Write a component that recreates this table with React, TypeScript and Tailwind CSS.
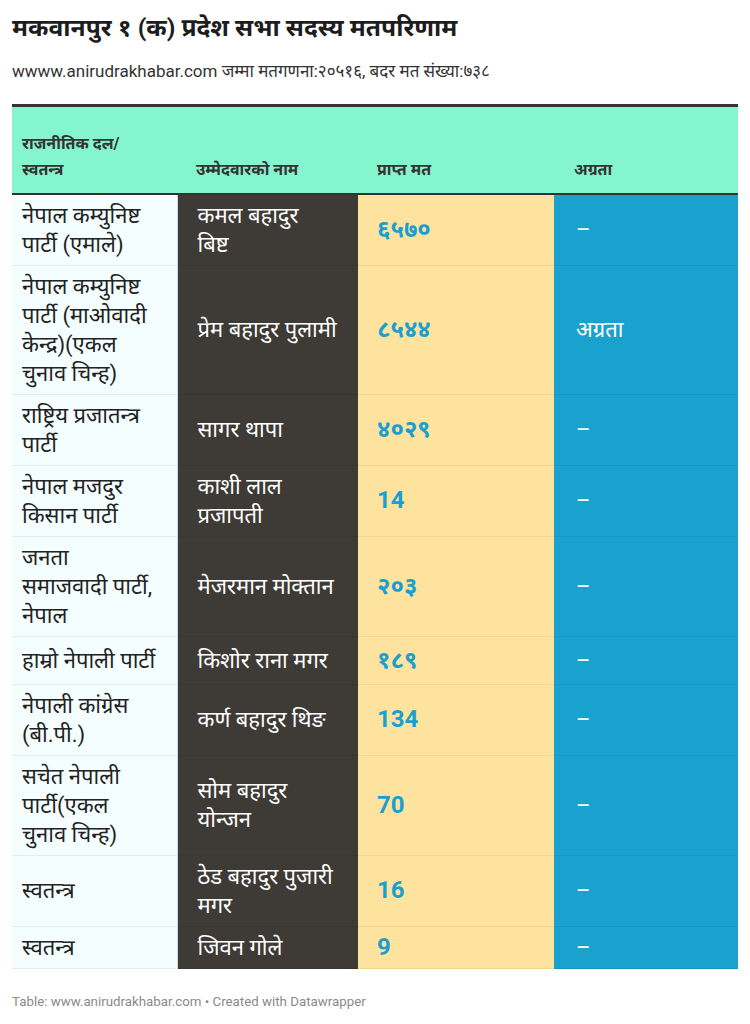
const rows = [
  { party: ["नेपाल कम्युनिष्ट", "पार्टी (एमाले)"], name: ["कमल बहादुर", "बिष्ट"], votes: "६५७०", lead: "–" },
  {
    party: ["नेपाल कम्युनिष्ट", "पार्टी (माओवादी", "केन्द्र)(एकल", "चुनाव चिन्ह)"],
    name: ["प्रेम बहादुर पुलामी"],
    votes: "८५४४",
    lead: "अग्रता",
  },
  { party: ["राष्ट्रिय प्रजातन्त्र", "पार्टी"], name: ["सागर थापा"], votes: "४०२९", lead: "–" },
  { party: ["नेपाल मजदुर", "किसान पार्टी"], name: ["काशी लाल", "प्रजापती"], votes: "14", lead: "–" },
  { party: ["जनता", "समाजवादी पार्टी,", "नेपाल"], name: ["मेजरमान मोक्तान"], votes: "२०३", lead: "–" },
  { party: ["हाम्रो नेपाली पार्टी"], name: ["किशोर राना मगर"], votes: "१८९", lead: "–", tall: true },
  { party: ["नेपाली कांग्रेस", "(बी.पी.)"], name: ["कर्ण बहादुर थिङ"], votes: "134", lead: "–" },
  { party: ["सचेत नेपाली", "पार्टी(एकल", "चुनाव चिन्ह)"], name: ["सोम बहादुर", "योन्जन"], votes: "70", lead: "–" },
  { party: ["स्वतन्त्र"], name: ["ठेड बहादुर पुजारी", "मगर"], votes: "16", lead: "–" },
  { party: ["स्वतन्त्र"], name: ["जिवन गोले"], votes: "9", lead: "–" },
];

function Lines({ lines }: { lines: string[] }) {
  return (
    <>
      {lines.map((line, i) => (
        <span key={i} className="block whitespace-nowrap">
          {line}
        </span>
      ))}
    </>
  );
}

export default function App() {
  return (
    <main className="min-h-screen bg-white px-3 pt-3 font-['Roboto','Noto_Sans',sans-serif] text-[#222]">
      {/* HEADER */}
      <h1 className="text-[24.6px] font-bold leading-[32px] text-[#1d1d1d]">
        मकवानपुर १ (क) प्रदेश सभा सदस्य मतपरिणाम
      </h1>
      <p className="mt-[16px] text-[17px] leading-[22px] text-[#333]">
        wwww.anirudrakhabar.com जम्मा मतगणना:२०५१६, बदर मत संख्या:७३८
      </p>

      {/* TABLE */}
      <table className="mt-[22px] w-[726px] table-fixed border-collapse">
        <colgroup>
          <col className="w-[165px]" />
          <col className="w-[181px]" />
          <col className="w-[196px]" />
          <col className="w-[184px]" />
        </colgroup>
        <thead>
          <tr className="h-[88px] border-t-[3px] border-b-2 border-[#333] bg-[#85f5cf] text-[16px] font-bold leading-[26px] text-[#333]">
            <th className="pb-[10px] pl-[10px] pr-2 text-left align-bottom font-bold">
              राजनीतिक दल/
              <br />
              स्वतन्त्र
            </th>
            <th className="pb-[10px] pl-[19px] text-left align-bottom font-bold">उम्मेदवारको नाम</th>
            <th className="pb-[10px] pl-[19px] text-left align-bottom font-bold">प्राप्त मत</th>
            <th className="pb-[10px] pl-[20px] text-left align-bottom font-bold">अग्रता</th>
          </tr>
        </thead>
        <tbody>
          {rows.map((row, index) => (
            <tr key={index} className={row.tall ? "h-[48px] text-[22px] leading-[29px]" : "text-[22px] leading-[29px]"}>
              <td className="border-b border-[#e4ecec] bg-[#f5fefe] py-[6px] pl-[10px] pr-3 align-middle text-[#222]">
                <Lines lines={row.party} />
              </td>
              <td className="border-b border-l border-b-[#3a3631] border-l-[#cfd4d4] bg-[#3e3a35] py-[6px] pl-[20px] pr-3 align-middle text-white">
                <Lines lines={row.name} />
              </td>
              <td className="border-b border-[#f2d990] bg-[#fde39d] py-[6px] pl-[19px] align-middle text-[24px] font-bold text-[#1a9fd0]">
                {row.votes}
              </td>
              <td className="border-b border-[#1897c1] bg-[#19a2ce] py-[6px] pl-[22px] align-middle text-white">
                {row.lead}
              </td>
            </tr>
          ))}
        </tbody>
      </table>

      {/* FOOTER */}
      <p className="mt-[24px] text-[13.3px] leading-[18px] text-[#8a8a8a]">
        Table: www.anirudrakhabar.com • Created with Datawrapper
      </p>
    </main>
  );
}
